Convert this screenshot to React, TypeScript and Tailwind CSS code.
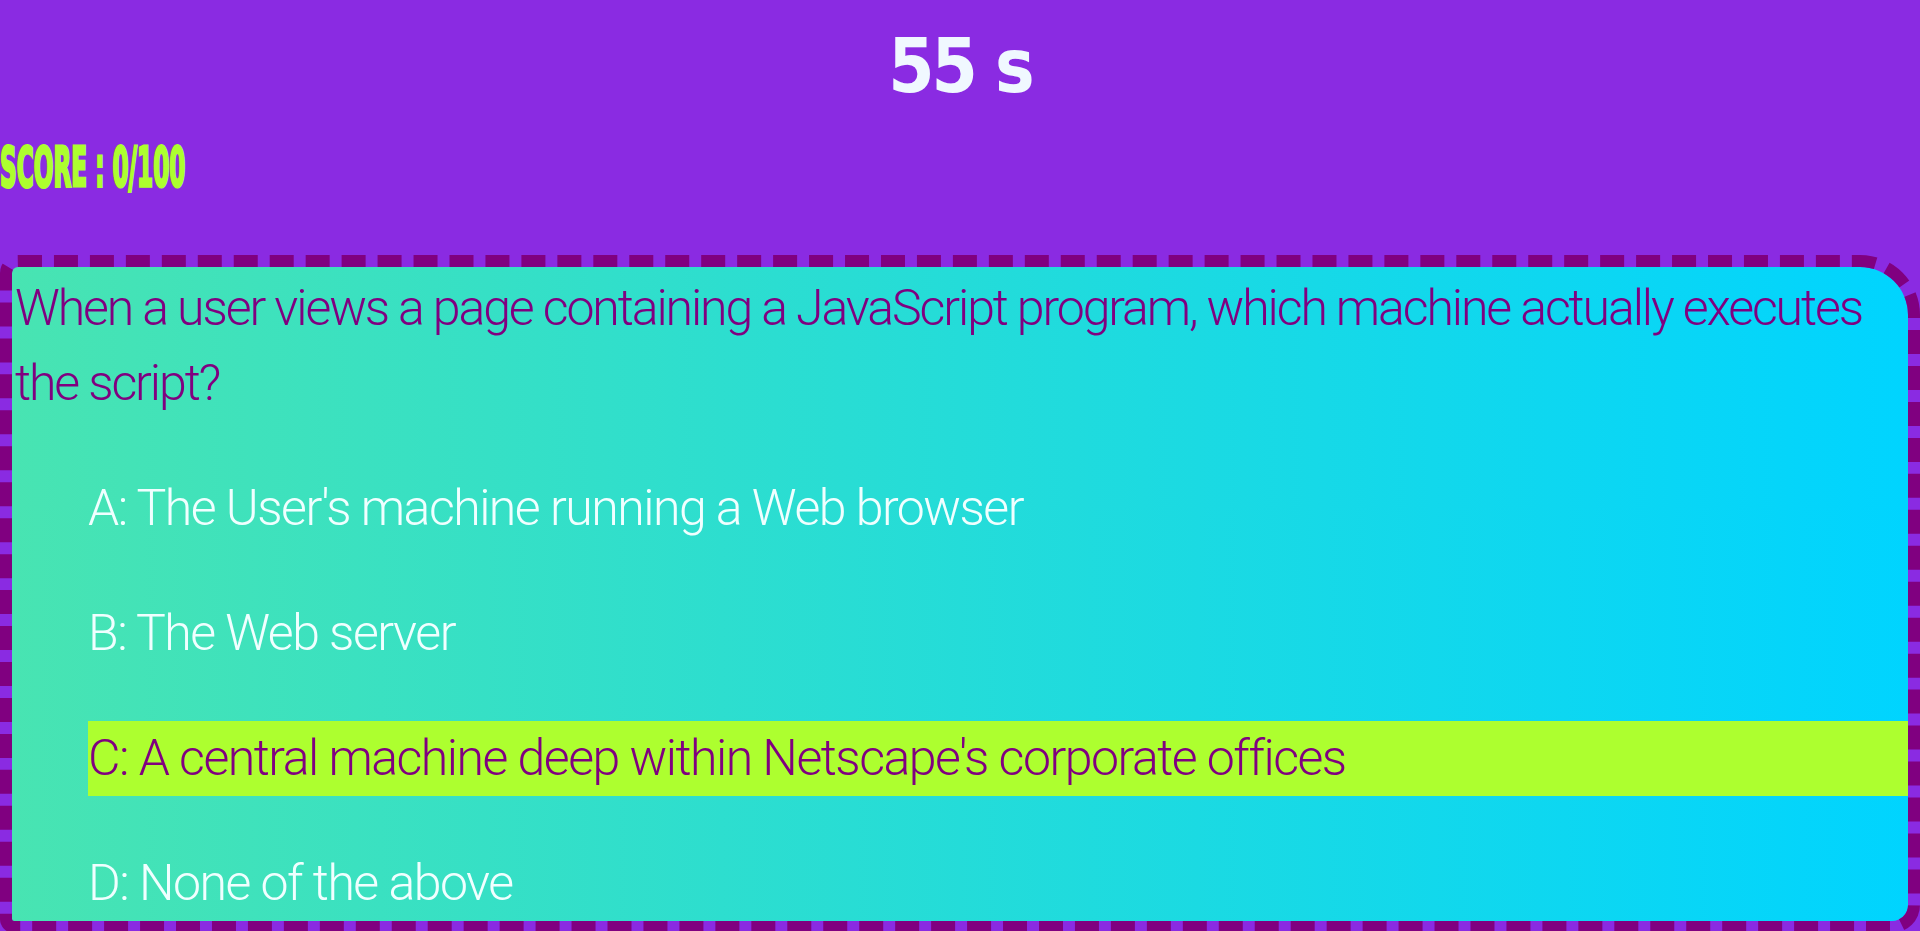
import React from "react";

const options = [
  { key: "A", text: "The User's machine running a Web browser", picked: false },
  { key: "B", text: "The Web server", picked: false },
  { key: "C", text: "A central machine deep within Netscape's corporate offices", picked: true },
  { key: "D", text: "None of the above", picked: false },
];

function Option({ label, text, picked }: { label: string; text: string; picked: boolean }) {
  return (
    <li
      className={
        picked
          ? "mt-[50px] leading-[75px] bg-[#adff2f] text-[#800080]"
          : "mt-[50px] leading-[75px] text-[#f0ffff]"
      }
    >
      {label}: {text}
    </li>
  );
}

export default function App() {
  return (
    <div className="min-h-screen overflow-hidden bg-[#8a2be2]">
      <h1 className="text-center font-['DejaVu_Sans_Condensed','Liberation_Sans',sans-serif] text-[74px] font-bold leading-[132px] tracking-[-3px] text-[#f0f8ff]">
        55 s
      </h1>
      <p className="mt-[7px] inline-block origin-left scale-x-[0.46] font-['DejaVu_Sans_Condensed','Liberation_Sans',sans-serif] text-[56px] font-bold leading-none text-[#adff2f] [-webkit-text-stroke:3px_#adff2f]">
        SCORE : 0/100
      </p>
      <div className="mt-[60px] rounded-[18px_60px_28px_14px] border-[12px] border-dashed border-[#800080] bg-[linear-gradient(90deg,#48e4b2,#00d4ff)] bg-clip-padding font-['Roboto','Liberation_Sans',sans-serif] text-[50px] font-light">
        <p className="pl-[3px] pt-[4px] leading-[75px] tracking-[-2.1px] text-[#800080]">
          When a user views a page containing a JavaScript program, which machine actually executes the script?
        </p>
        <ul className="pl-[76px] tracking-[-1.5px]">
          {options.map((o) => (
            <Option key={o.key} label={o.key} text={o.text} picked={o.picked} />
          ))}
        </ul>
      </div>
    </div>
  );
}
